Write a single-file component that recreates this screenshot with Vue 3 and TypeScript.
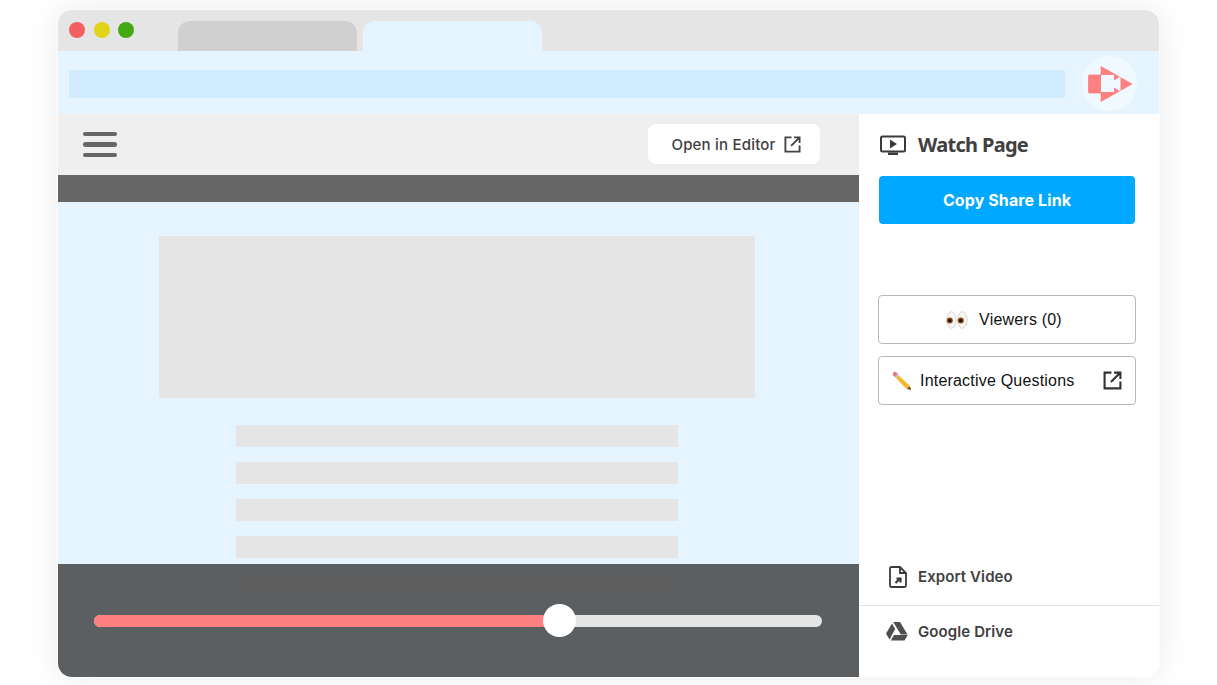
<script setup lang="ts">
const lines: number[] = [1, 2, 3, 4]
</script>

<template>
  <div class="page">
    <div class="window">
      <div class="tabbar">
        <div class="lights">
          <span class="light red"></span>
          <span class="light yellow"></span>
          <span class="light green"></span>
        </div>
        <div class="tabs">
          <div class="tab inactive"></div>
          <div class="tab active"></div>
        </div>
      </div>
      <div class="addressbar">
        <div class="url"></div>
        <div class="logo">
          <svg width="46" height="38" viewBox="0 0 46 38">
            <path fill="#ff8080" stroke="#ff8080" stroke-width="0.8" stroke-linejoin="round" d="M14 1.500 45 19 14 36.500V28H2.500Q1.500 28 1.500 27V11Q1.500 10 2.500 10H14Z" />
            <path fill="#f0f9ff" d="M14 10H27V15.500L33.500 11.500V26.500L27 22.500V27H14Z" />
          </svg>
        </div>
      </div>
      <div class="body">
        <div class="main">
          <div class="toolbar">
            <div class="burger"><span></span><span></span><span></span></div>
            <button class="editor">
              Open in Editor
              <svg class="ext" width="17" height="17" viewBox="0 0 18 18" fill="none" stroke="#444" stroke-width="2">
                <path d="M8 1.500H1.500V16.500H16.500V10" />
                <path d="M7.500 10.500 16 2M10.500 1.500H16.500V7.500" />
              </svg>
            </button>
          </div>
          <div class="darkband"></div>
          <div class="content">
            <div class="hero"></div>
            <div class="line" v-for="l in lines" :key="l"></div>
          </div>
          <div class="player">
            <div class="ghostline"></div>
            <div class="track">
              <div class="played"></div>
              <div class="knob"></div>
            </div>
          </div>
        </div>
        <aside class="side">
          <div class="side-top">
            <div class="title">
              <svg width="26" height="21" viewBox="0 0 26 21" fill="none">
                <rect x="1" y="2.500" width="24" height="15" rx="1.500" stroke="#3a3a3a" stroke-width="2" />
                <path d="M10 5.500 17 10 10 14.500Z" fill="#3a3a3a" />
                <path d="M8 18.500H18V21H8Z" fill="#3a3a3a" />
              </svg>
              <span>Watch Page</span>
            </div>
            <button class="copy">Copy Share Link</button>
            <button class="outline centered">
              <svg width="22" height="18" viewBox="0 0 22 18">
                <ellipse cx="5.500" cy="9" rx="4.700" ry="8.300" fill="#f8f6f3" stroke="#cfcac6" stroke-width="0.800" />
                <ellipse cx="16.500" cy="9" rx="4.700" ry="8.300" fill="#f8f6f3" stroke="#cfcac6" stroke-width="0.800" />
                <circle cx="3.800" cy="9.500" r="3" fill="#8a4a14" />
                <circle cx="14.800" cy="9.500" r="3" fill="#8a4a14" />
                <circle cx="3.800" cy="9.500" r="1.600" fill="#111" />
                <circle cx="14.800" cy="9.500" r="1.600" fill="#111" />
              </svg>
              <span class="txt">Viewers (0)</span>
            </button>
            <button class="outline spread">
              <svg class="pencil" width="20" height="20" viewBox="0 0 20 20">
                <path d="M5 3 17.500 14.500l1.500 4.500-4.700-1.300L2.500 5.500Z" fill="#f8b62b" />
                <path d="M3 6 6 3 4.200 1.200Q3 .4 1.800 1.300L1.200 1.900Q.3 3 1.200 4.200Z" fill="#e8757f" />
                <path d="M2.800 6 5.800 3 7 4.200 4 7.200Z" fill="#c9c9c9" />
                <path d="M15.200 18 17.800 15.200 19 19Z" fill="#5a4632" />
              </svg>
              <span class="txt iq">Interactive Questions</span>
              <svg width="19" height="19" viewBox="0 0 18 18" fill="none" stroke="#333" stroke-width="2">
                <path d="M8 1.500H1.500V16.500H16.500V10" />
                <path d="M7.500 10.500 16 2M10.500 1.500H16.500V7.500" />
              </svg>
            </button>
          </div>
          <div class="side-bottom">
            <div class="row export">
              <svg width="18" height="22" viewBox="0 0 18 22" fill="none">
                <path d="M2.500 1H11L17 7V19.500Q17 21 15.500 21H2.500Q1 21 1 19.500V2.500Q1 1 2.500 1Z" stroke="#3a3a3a" stroke-width="1.800" />
                <path d="M11 1V7H17" stroke="#3a3a3a" stroke-width="1.800" />
                <path d="M6.500 17 10.500 13M7.500 12.500H11.500V16.500" stroke="#3a3a3a" stroke-width="2.200" />
              </svg>
              <span>Export Video</span>
            </div>
            <div class="row drive">
              <svg width="22" height="19" viewBox="0 0 22 19" fill="#4f4f4f">
                <path d="M7.200 0H14L21.500 12.500H14.800Z" />
                <path d="M6 1.500 9.200 7 3.500 17.500 0 11.500Z" />
                <path d="M8 13H21.800L18.500 18.500H4.800Z" />
              </svg>
              <span>Google Drive</span>
            </div>
          </div>
        </aside>
      </div>
    </div>
  </div>
</template>

<style>
html, body { margin: 0; background: #fff; overflow: hidden; }
</style>

<style scoped>
.page {
  width: 1217px;
  height: 685px;
  box-sizing: border-box;
  padding: 10px 58px 8px;
  font-family: "Liberation Sans", Arial, sans-serif;
}
.window {
  height: 100%;
  display: flex;
  flex-direction: column;
  border-radius: 14px;
  overflow: hidden;
  background: #fff;
  box-shadow: 0 0 0 1.500px #fafafa, 0 0 32px rgba(0, 0, 0, 0.09);
}
.tabbar {
  height: 41px;
  flex: none;
  display: flex;
  background: #e5e5e5;
}
.lights {
  display: flex;
  gap: 8.500px;
  padding: 12px 0 0 11px;
}
.light { width: 16px; height: 16px; border-radius: 50%; }
.red { background: #f46060; }
.yellow { background: #e0d318; }
.green { background: #44a812; }
.tabs {
  display: flex;
  gap: 6px;
  margin-left: 44px;
  padding-top: 11px;
}
.tab { width: 179px; height: 30px; border-radius: 12px 12px 0 0; }
.inactive { background: #d0d0d0; }
.active { background: #e5f4ff; }
.addressbar {
  height: 63px;
  flex: none;
  box-sizing: border-box;
  display: flex;
  align-items: center;
  background: #e5f4ff;
  padding: 2px 22px 0 11px;
}
.url {
  width: 996px;
  height: 28px;
  background: #d1ebff;
  margin-right: 17px;
}
.logo {
  width: 55px;
  height: 55px;
  border-radius: 50%;
  background: #f0f9ff;
  display: flex;
  align-items: center;
  justify-content: center;
}
.logo svg { display: block; flex: none; }
.body { flex: 1; display: flex; min-height: 0; }
.main { width: 801px; flex: none; display: flex; flex-direction: column; }
.toolbar {
  height: 61px;
  flex: none;
  display: flex;
  align-items: center;
  justify-content: space-between;
  background: #efefef;
  padding: 0 39px 0 25px;
}
.burger { display: flex; flex-direction: column; gap: 6px; }
.burger span { display: block; width: 34px; height: 4.500px; border-radius: 3px; background: #666; }
.editor {
  width: 172px;
  height: 40px;
  margin-bottom: 1px;
  border: 0;
  border-radius: 8px;
  background: #fff;
  display: flex;
  align-items: center;
  justify-content: center;
  gap: 8px;
  padding: 0 0 0 4px;
  font: 500 15px Inter, Roboto, sans-serif;
  letter-spacing: 0.2px;
  color: #3f3f3f;
}
.ext { flex: none; }
.darkband { height: 27px; flex: none; background: #666; }
.content {
  flex: 1;
  background: #e5f4ff;
  display: flex;
  flex-direction: column;
  align-items: center;
  padding: 34px 3px 0 0;
  overflow: hidden;
}
.hero { width: 596px; height: 162px; background: #e5e5e5; margin-bottom: 27px; flex: none; }
.line { width: 442px; height: 22px; background: #e5e5e5; margin-bottom: 15px; flex: none; }
.player {
  height: 113px;
  flex: none;
  background: #5c5f61;
  display: flex;
  flex-direction: column;
  align-items: flex-start;
  padding: 9px 0 0 36px;
  box-sizing: border-box;
}
.ghostline { width: 442px; height: 22px; margin-left: 142px; background: #5f5e5e; flex: none; }
.track {
  width: 728px;
  height: 12px;
  margin-top: 20px;
  border-radius: 6px;
  background: #e5e5e5;
  position: relative;
  flex: none;
}
.played {
  width: 465px;
  height: 100%;
  border-radius: 6px 0 0 6px;
  background: #ff8080;
}
.knob {
  position: absolute;
  left: 449px;
  top: -11px;
  width: 33px;
  height: 33px;
  border-radius: 50%;
  background: #fff;
}
.side {
  flex: 1;
  display: flex;
  flex-direction: column;
  justify-content: space-between;
  background: #fff;
}
.side-top { display: flex; flex-direction: column; padding: 0 23px 0 19px; }
.title {
  height: 62px;
  box-sizing: border-box;
  display: flex;
  align-items: center;
  gap: 12px;
  padding: 0 0 2px 2px;
  font: 700 20px "Noto Sans", "Open Sans", sans-serif;
  color: #404040;
  letter-spacing: -0.7px;
}
.copy {
  height: 48px;
  margin: 0 1px;
  border: 0;
  border-radius: 4px;
  background: #00a8ff;
  color: #fff;
  font: 700 16px Inter, Roboto, sans-serif;
  letter-spacing: 0.1px;
  padding: 0;
}
.outline {
  height: 49px;
  border: 1px solid #b9b9b9;
  border-radius: 4px;
  background: #fff;
  display: flex;
  align-items: center;
  font: 16px "Liberation Sans", Arial, sans-serif;
  color: #111;
  padding: 0;
  box-sizing: border-box;
}
.txt { letter-spacing: 0.2px; }
.centered { justify-content: center; gap: 11px; margin-top: 71px; padding-right: 6px; }
.spread { margin-top: 12px; padding: 0 13px; justify-content: space-between; }
.iq { flex: 1; text-align: left; margin-left: 8px; }
.side-bottom { display: flex; flex-direction: column; padding-bottom: 21px; }
.row {
  display: flex;
  align-items: center;
  font: 600 15px Inter, Roboto, sans-serif;
  letter-spacing: 0.1px;
  color: #404040;
}
.export {
  height: 58px;
  box-sizing: border-box;
  gap: 11px;
  padding-left: 30px;
  border-bottom: 1px solid #e5e5e5;
}
.drive { height: 50px; gap: 10px; padding-left: 27px; }
</style>
